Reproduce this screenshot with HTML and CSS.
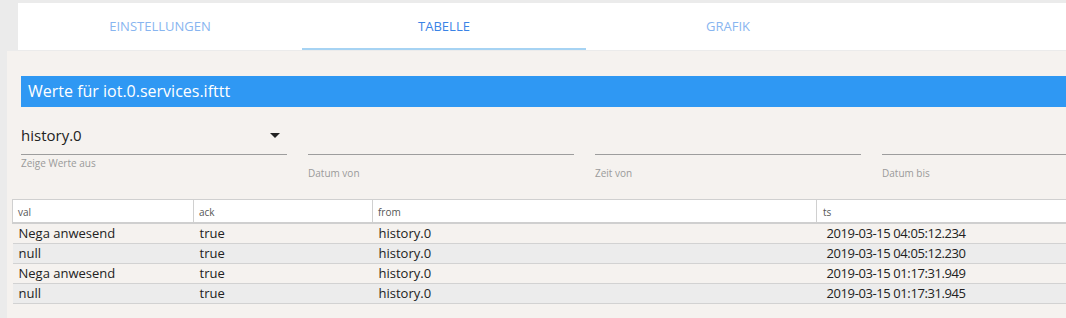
FILE: index.html
```html
<!doctype html>
<html lang="de">
  <head>
    <meta charset="utf-8">
    <title>iot.0.services.ifttt</title>
    <link rel="stylesheet" href="styles.css">
  </head>
  <body>
    <div class="tabs">
        <div class="tab">Einstellungen</div>
        <div class="tab active">Tabelle</div>
        <div class="tab">Grafik</div>
    </div>
    <div class="content">
        <div class="title">Werte für iot.0.services.ifttt</div>
        <div class="filters">
            <div class="field">
                <div class="control select">
                    <span>history.0</span>
                    <span class="arrow"></span>
                </div>
                <label class="hint">Zeige Werte aus</label>
            </div>
            <div class="field">
                <div class="control"></div>
                <label class="hint low">Datum von</label>
            </div>
            <div class="field">
                <div class="control"></div>
                <label class="hint low">Zeit von</label>
            </div>
            <div class="field">
                <div class="control"></div>
                <label class="hint low">Datum bis</label>
            </div>
        </div>
        <table class="values">
            <thead>
                <tr>
                    <th class="c-val">val</th>
                    <th class="c-ack">ack</th>
                    <th class="c-from">from</th>
                    <th class="c-ts">ts</th>
                </tr>
            </thead>
            <tbody>
                <tr><td>Nega anwesend</td><td>true</td><td>history.0</td><td class="ts">2019-03-15 04:05:12.234</td></tr>
                <tr><td>null</td><td>true</td><td>history.0</td><td class="ts">2019-03-15 04:05:12.230</td></tr>
                <tr><td>Nega anwesend</td><td>true</td><td>history.0</td><td class="ts">2019-03-15 01:17:31.949</td></tr>
                <tr><td>null</td><td>true</td><td>history.0</td><td class="ts">2019-03-15 01:17:31.945</td></tr>
            </tbody>
        </table>
    </div>
  </body>
</html>
```

FILE: styles.css
```css
* {
    font-family: "Open Sans", "Noto Sans", sans-serif;
}
html, body {
    margin: 0;
    height: 100%;
    overflow: hidden;
}
body {
    background: #ebebeb;
    padding-top: 3px;
    box-sizing: border-box;
    display: flex;
    flex-direction: column;
}

/* reiter oben */
.tabs {
    margin-left: 18px;
    height: 47px;
    flex: none;
    background: #fff;
    display: flex;
}
.tab {
    width: 284px;
    flex: none;
    box-sizing: border-box;
    text-align: center;
    line-height: 46px;
    font-size: 13px;
    text-transform: uppercase;
    color: #88b5f0;
}
.tab.active {
    color: #3a83e6;
    border-bottom: 2px solid #a6d3f3;
}

.content {
    flex: 1;
    margin-left: 7px;
    margin-top: 1px;
    background: #f5f2ef;
    padding-top: 25px;
    min-width: 0;
}

.title {
    margin-left: 14px;
    height: 31px;
    line-height: 30px;
    background: #2f98f3;
    color: #fff;
    font-size: 16px;
    padding-left: 7px;
}

.filters {
    display: flex;
    gap: 21px;
    margin-left: 14px;
    margin-top: 16px;
    overflow: hidden;
}
.field {
    width: 266px;
    flex: none;
}
.control {
    height: 32px;
    box-sizing: border-box;
    border-bottom: 1px solid #9d9d9d;
}
.select {
    display: flex;
    justify-content: space-between;
    font-size: 15px;
    line-height: 24px;
    color: #222;
}
.arrow {
    width: 0;
    height: 0;
    border-left: 5px solid transparent;
    border-right: 5px solid transparent;
    border-top: 5px solid #222;
    margin: 10px 7px 0 0;
}
.hint {
    display: block;
    font-size: 10px;
    color: #9a9a9a;
    margin-top: 1px;
}
.hint.low {
    margin-top: 11px;
}

/* tabelle mit den werten */
.values {
    margin-left: 5px;
    margin-top: 19px;
    border-collapse: collapse;
    table-layout: fixed;
    width: calc(100% - 5px);
}
.values th {
    background: #fff;
    border: 1px solid #d0d0d0;
    border-bottom: 2px solid #cfcfcf;
    font-size: 10px;
    font-weight: normal;
    color: #555;
    text-align: left;
    height: 23px;
    padding: 2px 0 0 5px;
    box-sizing: border-box;
}
.values th.c-ts {
    border-right: none;
    padding-left: 6px;
}
.c-val { width: 181px; }
.c-ack { width: 179px; }
.c-from { width: 444px; }
.values td {
    font-size: 13px;
    color: #222;
    height: 19px;
    padding: 0 0 0 6px;
    border-bottom: 1px solid #d2d2d2;
    white-space: nowrap;
}
.values td.ts {
    padding-left: 10px;
    letter-spacing: -0.4px;
}
.values tbody tr:nth-child(even) {
    background: #ececec;
}
```
